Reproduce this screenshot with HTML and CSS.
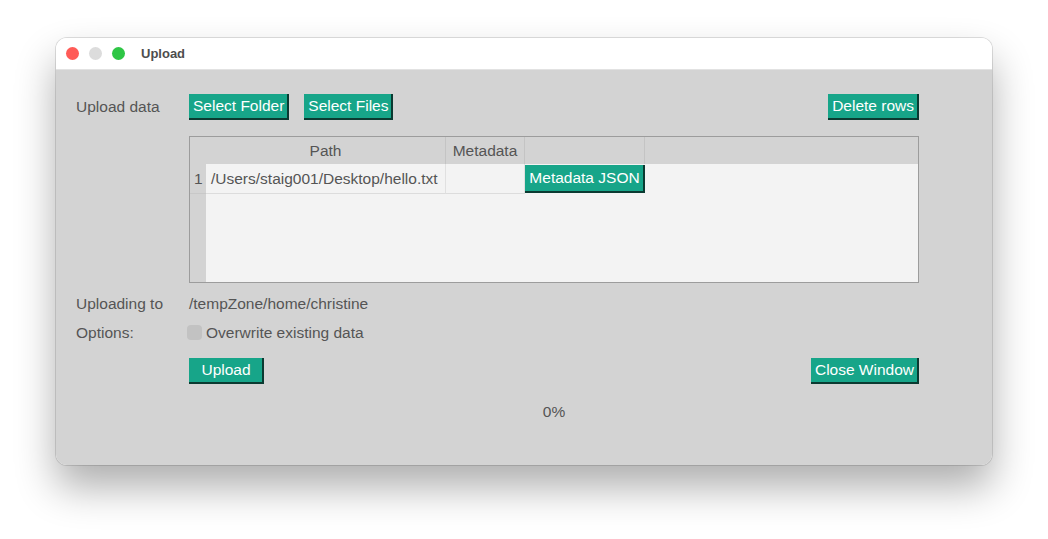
FILE: index.html
```html
<!DOCTYPE html>
<html lang="en">
<head>
  <meta charset="UTF-8">
  <title>Upload</title>
  <link rel="stylesheet" href="styles.css">
</head>
<body>

  <div class="window">
    <div class="titlebar">
      <span class="light red"></span>
      <span class="light grey"></span>
      <span class="light green"></span>
      <span class="title">Upload</span>
    </div>

    <div class="content">
      <div class="row top-row">
        <span class="label">Upload data</span>
        <div class="controls">
          <button class="btn">Select Folder</button>
          <button class="btn">Select Files</button>
          <button class="btn push-right">Delete rows</button>
        </div>
      </div>

      <div class="row">
        <span class="label"></span>
        <div class="table">
          <div class="cell index head"></div>
          <div class="cell head">Path</div>
          <div class="cell head">Metadata</div>
          <div class="cell head"></div>
          <div class="cell head last"></div>

          <div class="cell index num">1</div>
          <div class="cell data path">/Users/staig001/Desktop/hello.txt</div>
          <div class="cell data"></div>
          <div class="cell data btn-cell"><button class="btn json">Metadata JSON</button></div>
          <div class="cell blank"></div>

          <div class="cell index"></div>
          <div class="cell blank fill"></div>
        </div>
      </div>

      <div class="row info-row first-info">
        <span class="label">Uploading to</span>
        <span class="value">/tempZone/home/christine</span>
      </div>

      <div class="row info-row">
        <span class="label">Options:</span>
        <label class="check"><span class="box"></span>Overwrite existing data</label>
      </div>

      <div class="row action-row">
        <span class="label"></span>
        <div class="controls">
          <button class="btn wide">Upload</button>
          <button class="btn push-right">Close Window</button>
        </div>
      </div>

      <div class="progress">0%</div>
    </div>
  </div>

</body>
</html>
```

FILE: styles.css
```css
html, body {
  height: 100%;
}
body {
  margin: 0;
  box-sizing: border-box;
  background: #ffffff;
  font-family: "Liberation Sans", Arial, sans-serif;
  font-size: 15.5px;
  color: #555555;
  padding: 38px 0 0 56px;
}
.window {
  width: 936px;
  height: 427px;
  border-radius: 11px;
  overflow: hidden;
  box-shadow: 0 0 0 1px rgba(0, 0, 0, 0.12), 0 22px 40px rgba(0, 0, 0, 0.32);
  display: flex;
  flex-direction: column;
}
.titlebar {
  height: 32px;
  background: #ffffff;
  border-bottom: 1px solid #e2e2e2;
  display: flex;
  align-items: center;
  padding-left: 10px;
  box-sizing: border-box;
}
.light {
  width: 13px;
  height: 13px;
  border-radius: 50%;
  margin-right: 10px;
}
.red { background: #ff5b57; }
.grey { background: #dcdcdc; }
.green { background: #2ec645; }
.title {
  font-size: 13px;
  font-weight: bold;
  color: #4d4d4d;
  margin-left: 6px;
}
.content {
  flex: 1;
  background: #d3d3d3;
  padding: 24px 73px 0 20px;
}
.row {
  display: flex;
  align-items: center;
}
.label {
  width: 113px;
  flex-shrink: 0;
}
.controls {
  flex: 1;
  display: flex;
  gap: 15px;
}
.push-right {
  margin-left: auto;
}
.btn {
  font-family: inherit;
  font-size: 15.5px;
  color: #ffffff;
  background: #17a589;
  height: 26px;
  padding: 0 3px 0 4px;
  border: none;
  border-right: 2px solid #0b3a31;
  border-bottom: 2px solid #0b3a31;
  cursor: pointer;
}
.wide {
  min-width: 75px;
}
.table {
  margin-top: 16px;
  width: 730px;
  height: 147px;
  box-sizing: border-box;
  border: 1px solid #9c9c9c;
  background: #f3f3f3;
  display: grid;
  grid-template-columns: 16px 240px 79px 120px 1fr;
  grid-template-rows: 27px 30px 1fr;
}
.cell {
  box-sizing: border-box;
}
.head {
  background: #d3d3d3;
  border-right: 1px solid #c4c4c4;
  text-align: center;
  line-height: 27px;
}
.head.last { border-right: none; }
.index {
  background: #d3d3d3;
}
.index.head { border-right: none; }
.num {
  padding-left: 4px;
  line-height: 29px;
  border-bottom: 1px solid #c8c8c8;
}
.data {
  border-right: 1px solid #e0e0e0;
  border-bottom: 1px solid #dcdcdc;
}
.path {
  padding-left: 5px;
  line-height: 29px;
}
.btn-cell {
  border-right: none;
  border-bottom: none;
  padding-top: 1px;
}
.json {
  width: 120px;
  height: 28px;
}
.fill {
  grid-column: 2 / 6;
}
.info-row {
  height: 29px;
}
.first-info {
  margin-top: 6px;
}
.check {
  display: flex;
  align-items: center;
}
.box {
  width: 15px;
  height: 15px;
  border-radius: 4px;
  background: #c2c2c2;
  margin: 0 4px 0 -2px;
}
.action-row {
  margin-top: 11px;
}
.progress {
  text-align: center;
  margin: 19px 0 0 113px;
}
```
